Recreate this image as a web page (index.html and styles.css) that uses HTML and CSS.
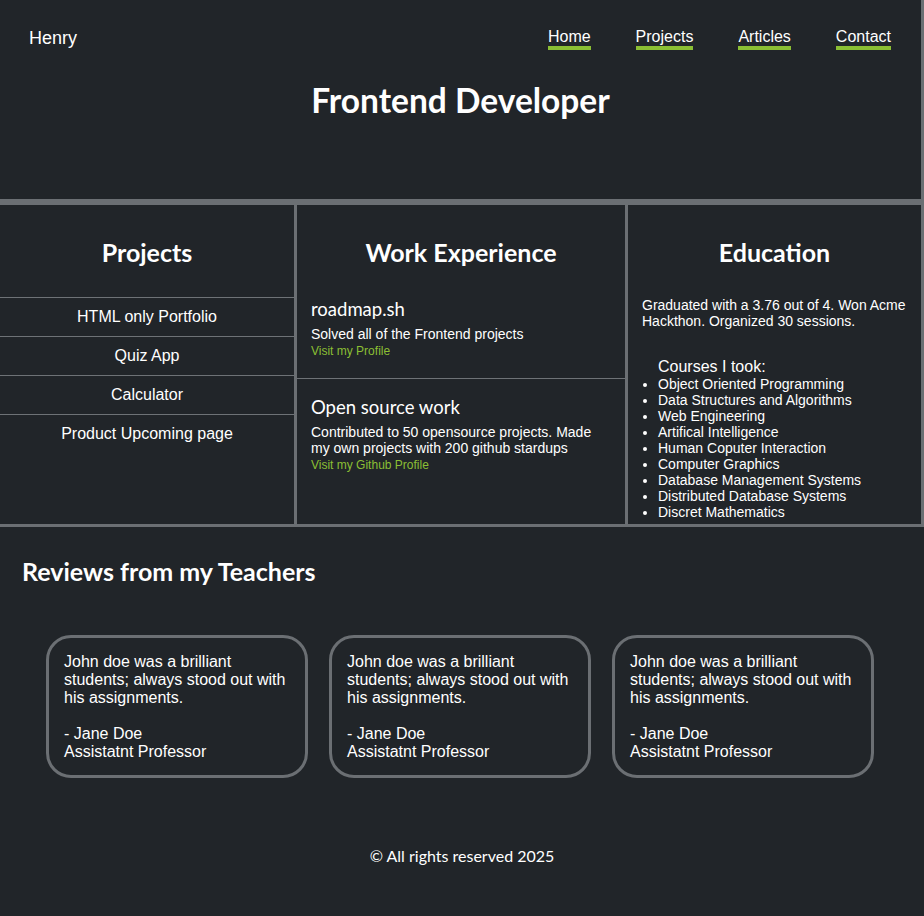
FILE: index.html
```html
<!DOCTYPE html>
<html lang="en">
<head>
<meta charset="utf-8">
<title>Henry - Frontend Developer</title>
<link rel="stylesheet" href="styles.css">
</head>
<body>
<header class="hero">
  <nav class="topbar">
    <div class="brand">Henry</div>
    <ul class="menu">
      <li><a href="#">Home</a></li>
      <li><a href="#">Projects</a></li>
      <li><a href="#">Articles</a></li>
      <li><a href="#">Contact</a></li>
    </ul>
  </nav>
  <h1 class="hero-title">Frontend Developer</h1>
</header>

<main class="panels">
  <section class="panel panel-projects">
    <h2 class="panel-title">Projects</h2>
    <ul class="project-list">
      <li>HTML only Portfolio</li>
      <li>Quiz App</li>
      <li>Calculator</li>
      <li>Product Upcoming page</li>
    </ul>
  </section>
  <section class="panel panel-work">
    <h2 class="panel-title">Work Experience</h2>
    <div class="work-list">
      <div class="work-item">
        <h3 class="work-title">roadmap.sh</h3>
        <p class="work-text">Solved all of the Frontend projects</p>
        <a class="work-link" href="#">Visit my Profile</a>
      </div>
      <div class="work-item work-item-divided">
        <h3 class="work-title">Open source work</h3>
        <p class="work-text">Contributed to 50 opensource projects. Made my own projects with 200 github stardups</p>
        <a class="work-link" href="#">Visit my Github Profile</a>
      </div>
    </div>
  </section>
  <section class="panel panel-edu">
    <h2 class="panel-title">Education</h2>
    <p class="edu-text">Graduated with a 3.76 out of 4. Won Acme Hackthon. Organized 30 sessions.</p>
    <div class="courses-label">Courses I took:</div>
    <ul class="courses">
      <li>Object Oriented Programming</li>
      <li>Data Structures and Algorithms</li>
      <li>Web Engineering</li>
      <li>Artifical Intelligence</li>
      <li>Human Coputer Interaction</li>
      <li>Computer Graphics</li>
      <li>Database Management Systems</li>
      <li>Distributed Database Systems</li>
      <li>Discret Mathematics</li>
    </ul>
  </section>
</main>

<section class="reviews">
  <h2 class="reviews-title">Reviews from my Teachers</h2>
  <div class="review-cards">
    <div class="review-card">John doe was a brilliant students; always stood out with his assignments.<br><br>- Jane Doe<br>Assistatnt Professor</div>
    <div class="review-card">John doe was a brilliant students; always stood out with his assignments.<br><br>- Jane Doe<br>Assistatnt Professor</div>
    <div class="review-card">John doe was a brilliant students; always stood out with his assignments.<br><br>- Jane Doe<br>Assistatnt Professor</div>
  </div>
</section>

<footer class="footer">© All rights reserved 2025</footer>
</body>
</html>
```

FILE: styles.css
```css
* { box-sizing: border-box; }

html, body {
  margin: 0;
  padding: 0;
  background: #212529;
  color: #ffffff;
  font-family: "Liberation Sans", Arial, sans-serif;
}

.hero {
  height: 202px;
  border-right: 3px solid #6b6f73;
  border-bottom: 3px solid #6b6f73;
}

.topbar {
  display: flex;
  justify-content: space-between;
  align-items: flex-start;
  padding: 27px 30px 0 29px;
}

.brand {
  font-size: 18px;
  line-height: 22px;
}

.menu {
  display: flex;
  gap: 45px;
  list-style: none;
  margin: 0;
  padding: 1px 0 0;
}

.menu a {
  display: block;
  color: #ffffff;
  text-decoration: none;
  font-size: 16px;
  line-height: 18px;
  border-bottom: 4px solid #8bbf34;
}

.hero-title {
  margin: 30px 0 0;
  text-align: center;
  font-family: Lato, "Open Sans", sans-serif;
  font-weight: 700;
  font-size: 33.5px;
  line-height: 40px;
}

.panels {
  display: grid;
  grid-template-columns: 297px 331px 296px;
  height: 325px;
  border-top: 3px solid #6b6f73;
  border-bottom: 3px solid #6b6f73;
}

.panel {
  border-right: 3px solid #6b6f73;
}

.panel-title {
  margin: 31px 0 0;
  text-align: center;
  font-family: Lato, "Open Sans", sans-serif;
  font-weight: 700;
  font-size: 25px;
  line-height: 32px;
}

.project-list {
  list-style: none;
  margin: 29px 0 0;
  padding: 0;
}

.project-list li {
  border-top: 1px solid #6e7276;
  text-align: center;
  font-size: 16px;
  line-height: 18px;
  padding: 10px 0;
}

.work-list {
  margin-top: 14px;
}

.work-item {
  padding: 15px 14px 19px;
}

.work-item-divided {
  border-top: 1px solid #6e7276;
  padding-top: 16px;
}

.work-title {
  margin: 0 0 5px;
  font-family: Lato, "Open Sans", sans-serif;
  font-weight: 400;
  font-size: 18.5px;
  line-height: 24px;
}

.work-text {
  margin: 0;
  font-size: 14px;
  line-height: 16px;
}

.work-link {
  display: block;
  margin-top: 1px;
  color: #8bbf34;
  text-decoration: none;
  font-size: 12px;
  line-height: 16px;
}

.edu-text {
  margin: 29px 0 0;
  padding: 0 14px;
  font-size: 14px;
  line-height: 16px;
}

.courses-label {
  margin-top: 29px;
  padding-left: 30px;
  font-size: 16px;
  line-height: 18px;
}

.courses {
  margin: 0;
  padding-left: 30px;
  font-size: 14px;
  line-height: 16px;
}

.reviews {
  padding: 30px 0 0;
}

.reviews-title {
  margin: 0;
  padding-left: 22px;
  font-family: Lato, "Open Sans", sans-serif;
  font-weight: 700;
  font-size: 25px;
  line-height: 28px;
}

.review-cards {
  display: flex;
  gap: 21px;
  padding: 0 46px;
  margin-top: 50px;
}

.review-card {
  width: 262px;
  border: 3px solid #6b6f73;
  border-radius: 25px;
  padding: 15px 15px 14px;
  font-size: 16px;
  line-height: 18px;
}

.footer {
  margin-top: 68px;
  text-align: center;
  font-family: Lato, "Open Sans", sans-serif;
  font-size: 16px;
  line-height: 20px;
}
```
